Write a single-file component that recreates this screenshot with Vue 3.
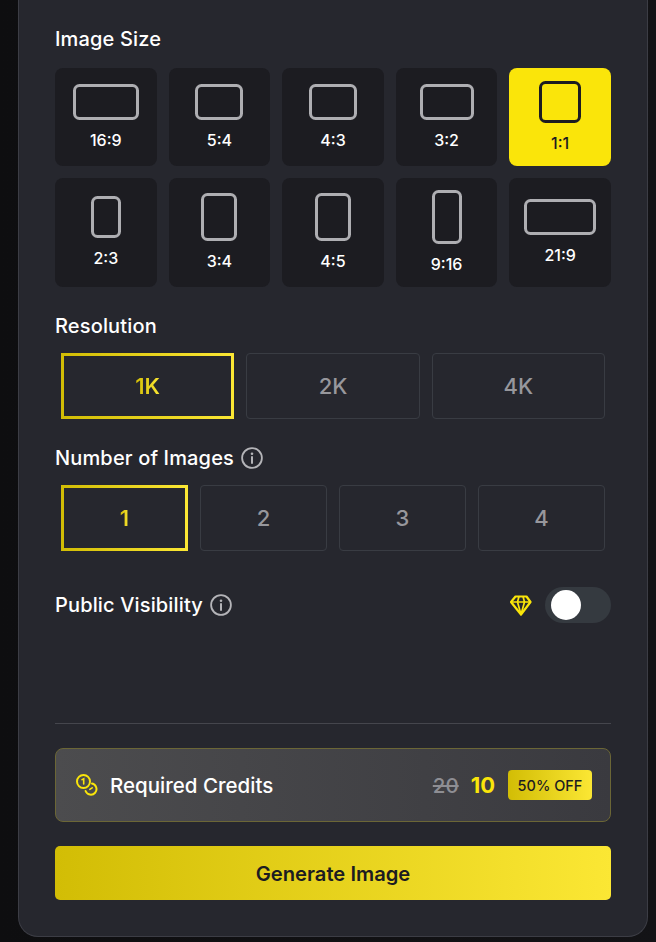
<template>
  <div class="page">
    <div class="panel">
      <div class="label first">Image Size</div>
      <div class="size-grid">
        <div v-for="s in sizes" :key="s.name" class="size-cell" :class="{ active: s.name === '1:1' }">
          <svg :width="s.w" :height="s.h" :viewBox="`0 0 ${s.w} ${s.h}`" fill="none">
            <rect x="1.5" y="1.5" :width="s.w - 3" :height="s.h - 3" rx="5" stroke="currentColor" stroke-width="3" />
          </svg>
          <span>{{ s.name }}</span>
        </div>
      </div>

      <div class="label">Resolution</div>
      <div class="choices three">
        <div v-for="(r, i) in resolutions" :key="r" class="choice" :class="{ active: i === 0 }"><span>{{ r }}</span></div>
      </div>

      <div class="label">
        Number of Images
        <svg class="info" width="22" height="22" viewBox="0 0 22 22" fill="none">
          <circle cx="11" cy="11" r="9.9" stroke="#b4b4b8" stroke-width="1.8" />
          <path d="M11 10v6" stroke="#b4b4b8" stroke-width="2" stroke-linecap="round" />
          <circle cx="11" cy="6.8" r="1.3" fill="#b4b4b8" />
        </svg>
      </div>
      <div class="choices four">
        <div v-for="(n, i) in counts" :key="n" class="choice" :class="{ active: i === 0 }"><span>{{ n }}</span></div>
      </div>

      <div class="visibility">
        <div class="label inline">
          Public Visibility
          <svg class="info" width="22" height="22" viewBox="0 0 22 22" fill="none">
            <circle cx="11" cy="11" r="9.9" stroke="#b4b4b8" stroke-width="1.8" />
            <path d="M11 10v6" stroke="#b4b4b8" stroke-width="2" stroke-linecap="round" />
            <circle cx="11" cy="6.8" r="1.3" fill="#b4b4b8" />
          </svg>
        </div>
        <div class="vis-right">
          <svg width="22" height="21" viewBox="0 0 22 21" fill="none" stroke="#fae50a" stroke-width="2.2" stroke-linejoin="round">
            <path d="M5.5 1.5h11l4 5.5L11 19.5 1 7z" />
            <path d="M1 7h20M7.5 7 11 19.5 14.5 7M7.5 7 9 1.5M14.5 7 13 1.5" stroke-width="1.7" />
          </svg>
          <div class="toggle"><div class="knob"></div></div>
        </div>
      </div>

      <div class="divider"></div>

      <div class="credits">
        <svg width="22" height="22" viewBox="0 0 22 22" fill="none" stroke="#fae50a" stroke-width="2" stroke-linecap="round">
          <circle cx="7.5" cy="7.5" r="6.5" />
          <path d="M6 5.6 7.7 4.8V10" stroke-width="1.6" />
          <path d="M16 9.6a5.6 5.6 0 1 1-6.4 7.4" />
          <path d="M16.2 13.8l-2.4 1.6" stroke-width="1.6" />
        </svg>
        <span class="credits-text">Required Credits</span>
        <span class="old">20</span>
        <span class="now">10</span>
        <span class="off">50% OFF</span>
      </div>

      <button class="generate">Generate Image</button>
    </div>
  </div>
</template>

<script setup>
const sizes = [
  { name: '16:9', w: 66, h: 36 },
  { name: '5:4', w: 48, h: 36 },
  { name: '4:3', w: 48, h: 36 },
  { name: '3:2', w: 54, h: 36 },
  { name: '1:1', w: 42, h: 42 },
  { name: '2:3', w: 30, h: 42 },
  { name: '3:4', w: 36, h: 48 },
  { name: '4:5', w: 36, h: 48 },
  { name: '9:16', w: 30, h: 54 },
  { name: '21:9', w: 72, h: 36 }
]
const resolutions = ['1K', '2K', '4K']
const counts = [1, 2, 3, 4]
</script>

<style>
body { background: #101013; }
</style>

<style scoped>
.page { height: 942px; box-sizing: border-box; padding: 0 8px 5px 18px; font-family: Inter, "Liberation Sans", sans-serif; background: linear-gradient(90deg, #0e0e10, #131316); }
.panel { width: 630px; height: 937px; box-sizing: border-box; padding: 0 36px 36px; display: flex; flex-direction: column; background: #26272e; border: 1px solid #3c3d45; border-top: none; border-radius: 0 0 20px 20px; }
.label { height: 24px; margin: 27px 0 15px; display: flex; align-items: center; gap: 7px; color: #fff; font-size: 20px; font-weight: 500; line-height: 24px; letter-spacing: 0.15px; }
.label.first { margin-bottom: 17px; }
.label.inline { margin: 0; }
.size-grid { display: grid; grid-template-columns: repeat(5, 1fr); grid-template-rows: 98px 109px; gap: 12px; }
.size-cell { display: flex; flex-direction: column; align-items: center; justify-content: center; gap: 9px; border-radius: 8px; background: #1c1c21; color: #aeaeb2; }
.size-cell span { color: #fff; font-size: 16px; font-weight: 500; line-height: 22px; }
.size-cell.active { background: #fae50a; color: #1c1c21; }
.size-cell.active span { color: #1c1c21; }
.choices { display: grid; gap: 12px; margin: 0 6px; }
.choices.three { grid-template-columns: repeat(3, 1fr); }
.choices.four { grid-template-columns: repeat(4, 1fr); }
.choice { height: 66px; box-sizing: border-box; display: flex; align-items: center; justify-content: center; border: 1px solid #393c43; border-radius: 4px; color: #97979c; font-size: 22px; font-weight: 500; }
.choice.active { border: 3px solid; border-image: linear-gradient(90deg, #d2bd05, #fbe734) 1; border-radius: 0; font-weight: 600; }
.choice.active span { background: linear-gradient(90deg, #d2bd05, #fbe734); -webkit-background-clip: text; background-clip: text; color: transparent; }
.visibility { display: flex; align-items: center; justify-content: space-between; margin-top: 36px; height: 36px; }
.vis-right { display: flex; align-items: center; gap: 13px; }
.toggle { width: 66px; height: 36px; box-sizing: border-box; padding: 3px 6px; border-radius: 18px; background: #353a40; }
.knob { width: 30px; height: 30px; border-radius: 50%; background: #fff; }
.divider { height: 1px; margin-top: 100px; background: #45464d; }
.credits { height: 74px; box-sizing: border-box; margin-top: 24px; padding: 0 18px 0 20px; display: flex; align-items: center; border: 1px solid #6b6636; border-radius: 8px; background: linear-gradient(90deg, #4c4c4e, #3a3a3f); }
.credits-text { flex: 1; margin-left: 12px; color: #fff; font-size: 20.5px; font-weight: 500; }
.old { color: #8e8e93; font-size: 20.5px; font-weight: 500; text-decoration: line-through; }
.now { margin-left: 12px; color: #fae50a; font-size: 22px; font-weight: 700; }
.off { width: 84px; height: 30px; margin-left: 13px; display: flex; align-items: center; justify-content: center; border-radius: 4px; background: linear-gradient(90deg, #d2bd05, #fbe734); color: #1c1c21; font-size: 14.5px; font-weight: 500; }
.generate { height: 54px; margin-top: 24px; border: none; border-radius: 5px; background: linear-gradient(90deg, #d2bd05, #fbe734); color: #1c1c21; font-family: inherit; font-size: 20.2px; font-weight: 600; }
</style>
